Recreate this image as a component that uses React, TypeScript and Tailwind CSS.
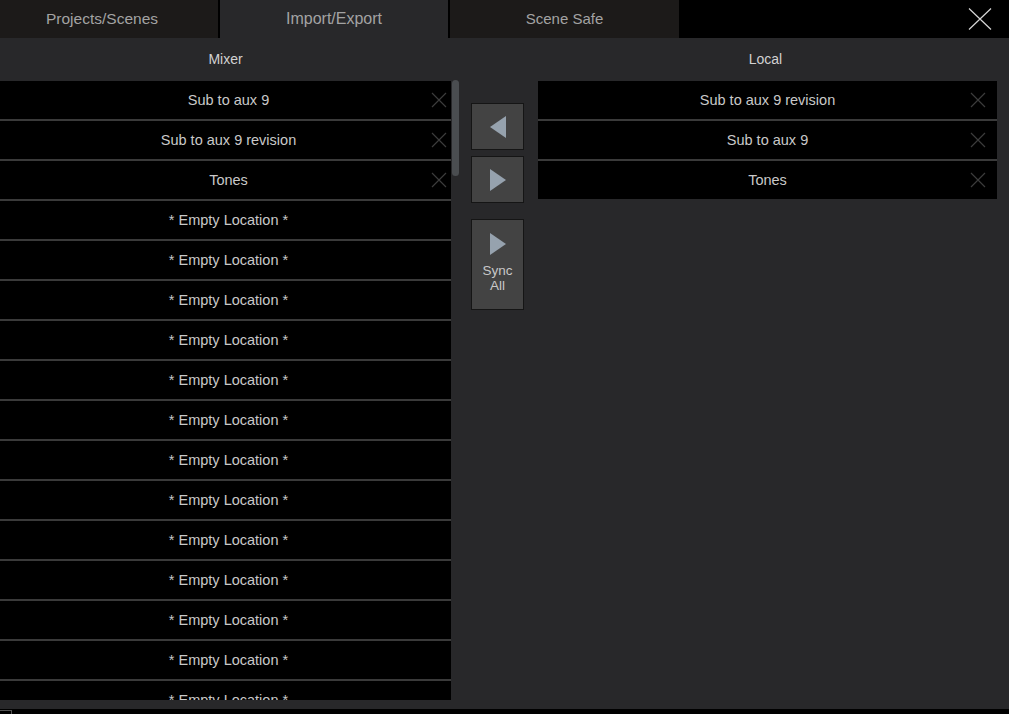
import React from "react";

const XIcon = ({ className = "" }: { className?: string }) => (
  <svg width="16" height="16" viewBox="0 0 16 16" className={className}>
    <path d="M1 1 L15 15 M15 1 L1 15" stroke="#3c3c3c" strokeWidth="1.2" fill="none" />
  </svg>
);

const Row = ({
  label,
  x,
  xRight,
  last,
  pad,
}: {
  label: string;
  x?: boolean;
  xRight: string;
  last?: boolean;
  pad?: string;
}) => (
  <div
    className={
      "relative shrink-0 bg-black flex items-center justify-center pt-[2px] text-[14.5px] text-[#c9c9c9] " +
      (pad || "") +
      " " +
      (last ? "h-[38px] mb-[2px]" : "h-[40px] border-b-2 border-[#3a3a3a]")
    }
  >
    <span>{label}</span>
    {x && <XIcon className={"absolute top-[11px] " + xRight} />}
  </div>
);

const Tri = ({ dir }: { dir: "left" | "right" }) => (
  <svg width="18" height="22" viewBox="0 0 18 22">
    {dir === "left" ? (
      <polygon points="17,0 17,22 1,11" fill="#96a2ae" />
    ) : (
      <polygon points="1,0 1,22 17,11" fill="#96a2ae" />
    )}
  </svg>
);

export default function App() {
  const mixer: { label: string; x?: boolean }[] = [
    { label: "Sub to aux 9", x: true },
    { label: "Sub to aux 9 revision", x: true },
    { label: "Tones", x: true },
    ...Array.from({ length: 13 }, () => ({ label: "* Empty Location *" })),
  ];
  const local = ["Sub to aux 9 revision", "Sub to aux 9", "Tones"];
  return (
    <div
      className="w-[1009px] h-[714px] bg-black flex flex-col overflow-hidden"
      style={{ fontFamily: '"Liberation Sans", Arial, sans-serif' }}
    >
      {/* Tabs */}
      <div className="h-[38px] flex items-stretch bg-black shrink-0">
        <div className="w-[218px] bg-[#1c1a19] flex items-center justify-center pr-[14px] text-[15.5px] text-[#a3a3a3]">
          Projects/Scenes
        </div>
        <div className="w-[2px]" />
        <div className="w-[228px] bg-[#28282a] flex items-center justify-center text-[16px] text-[#a3a3a3]">
          Import/Export
        </div>
        <div className="w-[2px]" />
        <div className="w-[229px] bg-[#1c1a19] flex items-center justify-center text-[15px] text-[#a3a3a3]">
          Scene Safe
        </div>
        <div className="flex-1 flex items-center justify-end pr-[17px]">
          <svg width="24" height="22" viewBox="0 0 24 22">
            <path d="M1 0.5 L23 21.5 M23 0.5 L1 21.5" stroke="#d6d6d6" strokeWidth="1.2" fill="none" />
          </svg>
        </div>
      </div>

      {/* Panel */}
      <div className="h-[671px] bg-[#28282a] flex shrink-0">
        {/* Mixer column */}
        <div className="w-[451px] flex flex-col">
          <div className="h-[43px] flex items-center justify-center text-[14px] text-[#d2d2d2]">Mixer</div>
          <div className="h-[619px] overflow-hidden flex flex-col">
            {mixer.map((r, i) => (
              <Row key={i} label={r.label} x={r.x} xRight="right-[4px]" pad="pl-[6px]" />
            ))}
          </div>
        </div>
        {/* Scrollbar */}
        <div className="w-[9px] pt-[42px]">
          <div className="ml-[1px] w-[7px] h-[96px] rounded-[4px] bg-[#4a4d50]" />
        </div>
        {/* Buttons */}
        <div className="w-[78px] pl-[11px] pt-[65px] flex flex-col">
          <div className="w-[53px] h-[47px] bg-[#434343] border border-[#151515] flex items-center justify-center">
            <Tri dir="left" />
          </div>
          <div className="mt-[6px] w-[53px] h-[47px] bg-[#434343] border border-[#151515] flex items-center justify-center">
            <Tri dir="right" />
          </div>
          <div className="mt-[16px] w-[53px] h-[91px] bg-[#434343] border border-[#151515] flex flex-col items-center pt-[13px]">
            <Tri dir="right" />
            <div className="mt-[8px] text-[13.5px] leading-[15px] text-[#c8c8c8] text-center">
              Sync
              <br />
              All
            </div>
          </div>
        </div>
        {/* Local column */}
        <div className="w-[459px] flex flex-col">
          <div className="h-[43px] flex items-center justify-center text-[14px] text-[#d2d2d2] pr-[4px]">Local</div>
          <div className="flex flex-col">
            {local.map((l, i) => (
              <Row key={i} label={l} x xRight="right-[11px]" last={i === local.length - 1} />
            ))}
          </div>
        </div>
      </div>

      {/* Bottom */}
      <div className="flex-1 bg-black relative">
        <div className="absolute left-0 top-[1px] w-[12px] h-[6px] border-t border-r border-[#555]" />
      </div>
    </div>
  );
}
